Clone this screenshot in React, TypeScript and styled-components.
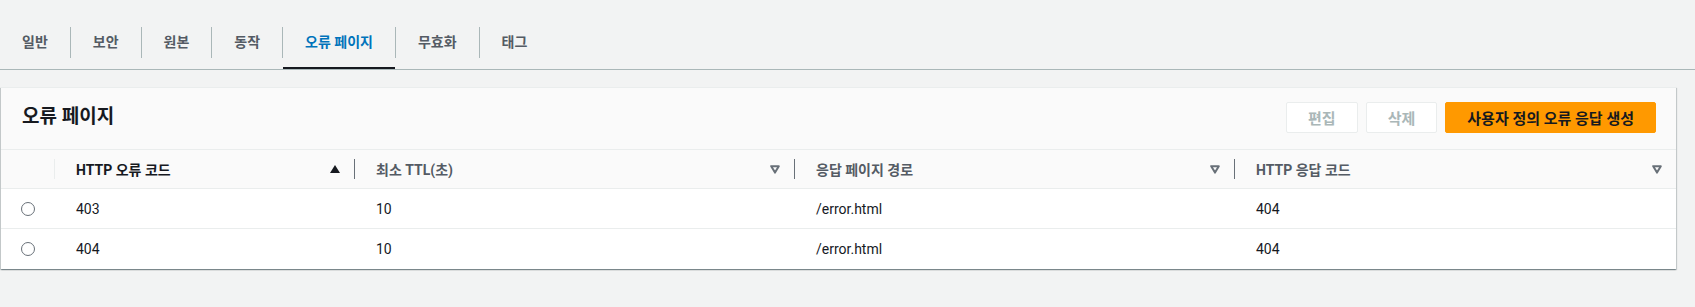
import styled, { createGlobalStyle } from 'styled-components';

const GlobalStyle = createGlobalStyle`
	body {
		margin: 0;
		background: #f2f3f3;
		font-family: Roboto, 'Noto Sans CJK KR', sans-serif;
		font-size: 14px;
		color: #16191f;
	}
`;

const tabs = ['일반', '보안', '원본', '동작', '오류 페이지', '무효화', '태그'];
const activeTab = '오류 페이지';

interface Column {
	label: string;
	sort: 'asc' | 'none';
}

const columns: Column[] = [
	{ label: 'HTTP 오류 코드', sort: 'asc' },
	{ label: '최소 TTL(초)', sort: 'none' },
	{ label: '응답 페이지 경로', sort: 'none' },
	{ label: 'HTTP 응답 코드', sort: 'none' },
];

const rows = [
	{ code: '403', ttl: '10', path: '/error.html', response: '404' },
	{ code: '404', ttl: '10', path: '/error.html', response: '404' },
];

function SortIcon({ sort }: { sort: 'asc' | 'none' }) {
	if (sort === 'asc') {
		return (
			<svg width='10' height='8' viewBox='0 0 10 8'>
				<polygon points='5,0 10,8 0,8' fill='#16191f' />
			</svg>
		);
	}
	return (
		<svg width='10' height='9' viewBox='0 0 10 9'>
			<polygon points='1.2,1.2 8.8,1.2 5,7.6' fill='none' stroke='#687078' strokeWidth='2' strokeLinejoin='round' />
		</svg>
	);
}

function App() {
	return (
		<Page>
			<GlobalStyle />
			<TabBar>
				{tabs.map((tab, i) => (
					<TabGroup key={tab}>
						{i > 0 && <TabDivider />}
						<Tab $active={tab === activeTab}>{tab}</Tab>
					</TabGroup>
				))}
			</TabBar>

			<Panel>
				<PanelHeader>
					<Title>오류 페이지</Title>
					<Actions>
						<Button disabled>편집</Button>
						<Button disabled>삭제</Button>
						<Button $primary>사용자 정의 오류 응답 생성</Button>
					</Actions>
				</PanelHeader>

				<Table>
					<HeadRow>
						<HeadCell />
						{columns.map((col, i) => (
							<HeadCell key={col.label}>
								<HeadDivider $light={i === 0} />
								<HeadLabel $sorted={col.sort === 'asc'}>{col.label}</HeadLabel>
								<SortIcon sort={col.sort} />
							</HeadCell>
						))}
					</HeadRow>
					{rows.map((row, i) => (
						<Row key={row.code} $last={i === rows.length - 1}>
							<RadioCell>
								<Radio />
							</RadioCell>
							<Cell>{row.code}</Cell>
							<Cell>{row.ttl}</Cell>
							<Cell>{row.path}</Cell>
							<Cell>{row.response}</Cell>
						</Row>
					))}
				</Table>
			</Panel>
		</Page>
	);
}

export default App;

const Page = styled.div`
	padding-top: 19px;
	min-height: 307px;
	box-sizing: border-box;
`;

const TabBar = styled.div`
	display: flex;
	align-items: stretch;
	height: 50px;
	border-bottom: 1px solid #aab7b8;
`;

const TabGroup = styled.div`
	display: flex;
	align-items: center;
`;

const TabDivider = styled.span`
	width: 1px;
	height: 31px;
	margin-top: -4px;
	background: #aab7b8;
`;

const Tab = styled.div<{ $active?: boolean }>`
	height: 100%;
	box-sizing: border-box;
	display: flex;
	align-items: center;
	padding: 0 22px 4px;
	font-size: 14px;
	font-weight: 700;
	color: ${props => (props.$active ? '#0073bb' : '#545b64')};
	border-bottom: 2px solid ${props => (props.$active ? '#16191f' : 'transparent')};
	white-space: nowrap;
`;

const Panel = styled.section`
	margin: 17px 19px 0 1px;
	background: #fff;
	border-top: 1px solid #eaeded;
	box-shadow: 0 1px 1px 0 rgba(0, 28, 36, 0.3), 1px 1px 1px 0 rgba(0, 28, 36, 0.15),
		-1px 1px 1px 0 rgba(0, 28, 36, 0.15);
`;

const PanelHeader = styled.header`
	display: flex;
	align-items: flex-start;
	justify-content: space-between;
	padding: 14px 20px 16px 21px;
	background: #fafafa;
	border-bottom: 1px solid #eaeded;
`;

const Title = styled.h2`
	margin: 2px 0 0;
	font-size: 19px;
	line-height: 25px;
	font-weight: 700;
	color: #16191f;
`;

const Actions = styled.div`
	display: flex;
	gap: 8px;
`;

const Button = styled.button<{ $primary?: boolean }>`
	height: 31px;
	padding: 0 21px;
	font-family: inherit;
	font-size: 15px;
	font-weight: 700;
	border-radius: 2px;
	border: 1px solid ${props => (props.$primary ? '#ff9900' : '#eaeded')};
	background: ${props => (props.$primary ? '#ff9900' : '#fff')};
	color: ${props => (props.$primary ? '#16191f' : '#aab7b8')};
	cursor: pointer;
	&:disabled {
		cursor: default;
	}
`;

const Table = styled.div`
	display: grid;
	grid-template-columns: 53px 300px 440px 440px 1fr;
`;

const HeadRow = styled.div`
	display: contents;
`;

const HeadCell = styled.div`
	display: flex;
	align-items: center;
	height: 38px;
	padding-right: 14px;
	background: #fafafa;
	border-bottom: 1px solid #eaeded;
`;

const HeadDivider = styled.span<{ $light?: boolean }>`
	width: 1px;
	height: 20px;
	background: ${props => (props.$light ? '#eaeded' : '#687078')};
`;

const HeadLabel = styled.span<{ $sorted?: boolean }>`
	flex: 1;
	padding-left: 21px;
	font-weight: 700;
	color: ${props => (props.$sorted ? '#16191f' : '#545b64')};
	white-space: nowrap;
`;

const Row = styled.div<{ $last?: boolean }>`
	display: contents;
	& > div {
		height: 39px;
		border-bottom: 1px solid ${props => (props.$last ? 'transparent' : '#eaeded')};
	}
`;

const Cell = styled.div`
	display: flex;
	align-items: center;
	padding-left: 22px;
	color: #16191f;
`;

const RadioCell = styled.div`
	display: flex;
	align-items: center;
	justify-content: center;
`;

const Radio = styled.span`
	width: 12px;
	height: 12px;
	border-radius: 50%;
	border: 1px solid #687078;
	background: #fff;
`;
